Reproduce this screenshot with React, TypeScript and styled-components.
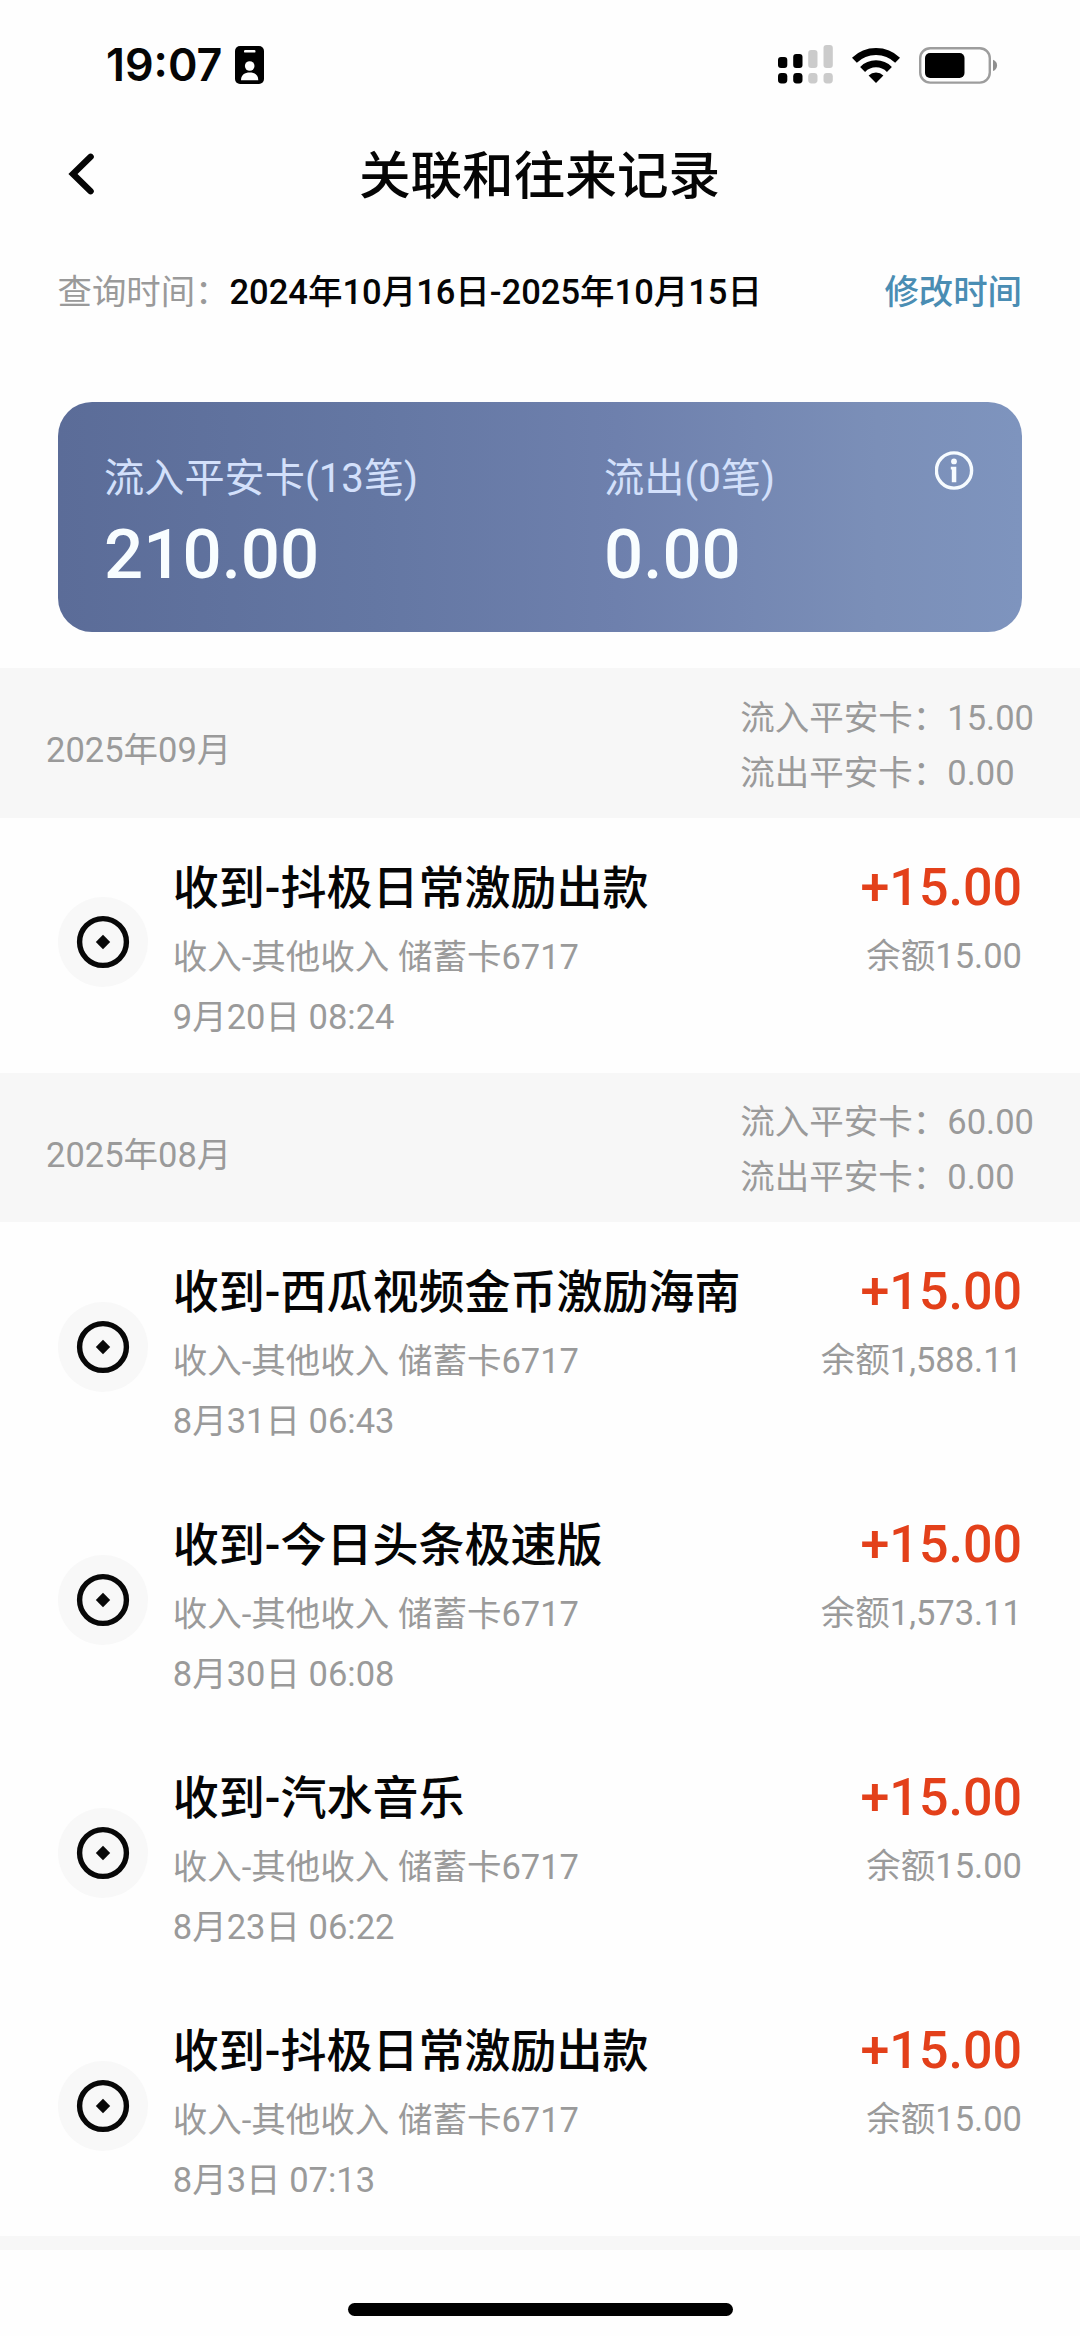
import React from "react";
import styled, { createGlobalStyle } from "styled-components";

const GlobalStyle = createGlobalStyle`
  *, *::before, *::after { box-sizing: border-box; }
  body {
    margin: 0;
    background: #fefefe;
    font-family: Roboto, "Noto Sans CJK SC", sans-serif;
    color: #050505;
  }
`;

const Screen = styled.div`
  width: 1080px;
  height: 2336px;
  display: flex;
  flex-direction: column;
  background: #fefefe;
  overflow: hidden;
`;

const StatusBar = styled.header`
  height: 128px;
  padding: 2px 82px 0 106px;
  display: flex;
  align-items: center;
  justify-content: space-between;
`;

const StatusSide = styled.div`
  display: flex;
  align-items: center;
`;

const Clock = styled.span`
  width: 129px;
  font-family: Inter, sans-serif;
  font-size: 44.8px;
  line-height: 60px;
  font-weight: 600;
  white-space: nowrap;
`;

const StatusIcon = styled.svg<{ $gap?: number }>`
  display: block;
  flex: none;
  margin-left: ${(p) => p.$gap ?? 0}px;
`;

const NavBar = styled.nav`
  height: 92px;
  padding: 0 60px 0 59px;
  display: grid;
  grid-template-columns: 60px 1fr 60px;
  align-items: center;
`;

const BackButton = styled.button`
  width: 44px;
  height: 60px;
  padding: 0 0 4px;
  border: 0;
  background: none;
  display: flex;
  align-items: center;
  justify-content: center;
`;

const Title = styled.h1`
  margin: 0;
  padding-top: 3px;
  text-align: center;
  font-size: 51.6px;
  line-height: 92px;
  font-weight: 500;
`;

const QueryRow = styled.div`
  height: 182px;
  padding: 47px 58px 0 57.5px;
  display: flex;
  align-items: flex-start;
  font-size: 34.4px;
  line-height: 50px;
  white-space: nowrap;
`;

const QueryLabel = styled.span`
  width: 172px;
  color: #9a9a9a;
`;

const QueryRange = styled.span`
  flex: 1;
  font-size: 34.5px;
  font-weight: 500;
`;

const EditLink = styled.a`
  color: #4a8db3;
  font-weight: 500;
`;

const SummaryCard = styled.section`
  height: 230px;
  margin: 0 58px 36px 57.5px;
  padding: 48px 47px 0 46.5px;
  display: grid;
  grid-template-columns: 500px 1fr 40px;
  align-items: start;
  border-radius: 34px;
  background: linear-gradient(90deg, #5b6c98 0%, #6477a3 33%, #6e80ad 58%, #7b8fb8 85%, #7e94be 100%);
`;

const SummaryLabel = styled.div`
  font-size: 40.2px;
  line-height: 58px;
  color: #d3e0fb;
  white-space: nowrap;
`;

const SummaryValue = styled.div`
  margin-top: 2px;
  font-size: 69px;
  line-height: 90px;
  font-weight: 500;
  color: #f8fdff;
`;

const InfoIcon = styled.svg`
  display: block;
`;

const MonthBar = styled.div`
  height: 149.5px;
  padding: 0 46px;
  display: flex;
  align-items: center;
  justify-content: space-between;
  background: #f7f7f7;
  color: #9a9a9a;
  font-size: 34.5px;
  white-space: nowrap;
`;

const MonthName = styled.div`
  padding-top: 15px;
  line-height: 50px;
`;

const MonthTotals = styled.div`
  line-height: 55px;
  padding-top: 6px;
`;

const MonthSection = styled.section`
  padding-bottom: 2px;
`;

const Entry = styled.article`
  height: 253px;
  padding: 40px 58px 0 58px;
  display: grid;
  grid-template-columns: 114.8px 1fr auto;
`;

const EntryBadge = styled.div`
  width: 90px;
  height: 90px;
  margin-top: 39.5px;
  border-radius: 50%;
  background: #f8f8f8;
  display: flex;
  align-items: center;
  justify-content: center;
`;

const EntryText = styled.div`
  color: #9a9a9a;
  font-size: 34.5px;
  white-space: nowrap;
`;

const EntryTitle = styled.div`
  color: #050505;
  font-size: 46px;
  line-height: 60px;
  font-weight: 500;
`;

const EntryLine = styled.div<{ $top: number }>`
  margin-top: ${(p) => p.$top}px;
  line-height: 50px;
`;

const EntryMoney = styled(EntryText)`
  text-align: right;
`;

const Amount = styled.div`
  color: #e3401a;
  font-size: 52px;
  line-height: 60px;
  font-weight: 500;
`;

const Divider = styled.div`
  height: 14px;
  background: #f7f7f7;
`;

const HomeArea = styled.footer`
  flex: 1;
  padding-top: 53px;
  display: flex;
  justify-content: center;
`;

const HomeBar = styled.div`
  width: 385px;
  height: 13px;
  border-radius: 7px;
  background: #000;
`;

type Item = { title: string; time: string; balance: string };
type Month = { name: string; income: string; outcome: string; items: Item[] };

const months: Month[] = [
  {
    name: "2025年09月",
    income: "15.00",
    outcome: "0.00",
    items: [{ title: "收到-抖极日常激励出款", time: "9月20日 08:24", balance: "15.00" }],
  },
  {
    name: "2025年08月",
    income: "60.00",
    outcome: "0.00",
    items: [
      { title: "收到-西瓜视频金币激励海南", time: "8月31日 06:43", balance: "1,588.11" },
      { title: "收到-今日头条极速版", time: "8月30日 06:08", balance: "1,573.11" },
      { title: "收到-汽水音乐", time: "8月23日 06:22", balance: "15.00" },
      { title: "收到-抖极日常激励出款", time: "8月3日 07:13", balance: "15.00" },
    ],
  },
];

const signalBars = [
  { x: 0, top: 12, on: true },
  { x: 15.2, top: 9, on: true },
  { x: 30.2, top: 5, on: false },
  { x: 45.5, top: 0, on: false },
];

function IdBadge() {
  return (
    <StatusIcon width="29" height="38" viewBox="0 0 29 38">
      <rect width="29" height="38" rx="5" fill="#000" />
      <rect x="9" y="4" width="11.5" height="2.6" rx="1.2" fill="#fff" />
      <circle cx="14.7" cy="20" r="4.8" fill="#fff" />
      <path d="M6 34.2C6 29 9.8 26.6 14.7 26.6S23.3 29 23.3 34.2Z" fill="#fff" />
    </StatusIcon>
  );
}

function Signal() {
  return (
    <StatusIcon width="55" height="40" viewBox="0 0 55 40">
      {signalBars.map((b) => (
        <g key={b.x} fill={b.on ? "#000" : "#cbcbcb"}>
          <rect x={b.x} y={b.top} width="9.3" height={23 - b.top} rx="3" />
          <rect x={b.x} y="28" width="9.3" height="10.5" rx="3.4" />
        </g>
      ))}
    </StatusIcon>
  );
}

function Wifi() {
  return (
    <StatusIcon $gap={19} width="48" height="36" viewBox="0 0 48 36">
      <g fill="none" stroke="#000" strokeWidth="7">
        <path d="M2.4 13.2A31 31 0 0 1 45.6 13.2" />
        <path d="M10.6 22.4A19 19 0 0 1 37.4 22.4" />
      </g>
      <path d="M16.6 28.4A10.6 10.6 0 0 1 31.4 28.4L24 36Z" fill="#000" />
    </StatusIcon>
  );
}

function Battery() {
  return (
    <StatusIcon $gap={19} width="79" height="37" viewBox="0 0 79 37">
      <rect x="1.2" y="1.2" width="69.6" height="34.4" rx="10" fill="none" stroke="#9d9d9d" strokeWidth="2.4" />
      <rect x="6" y="6" width="39.5" height="25" rx="5" fill="#000" />
      <path d="M74 12.8C79.4 14.5 79.4 22.3 74 24Z" fill="#8f8f8f" />
    </StatusIcon>
  );
}

export default function App() {
  return (
    <>
      <GlobalStyle />
      <Screen>
        <StatusBar>
          <StatusSide>
            <Clock>19:07</Clock>
            <IdBadge />
          </StatusSide>
          <StatusSide>
            <Signal />
            <Wifi />
            <Battery />
          </StatusSide>
        </StatusBar>

        <NavBar>
          <BackButton aria-label="返回">
            <svg width="26" height="42" viewBox="0 0 26 42">
              <path d="M22.6 3.8L5 21L22.6 38.2" fill="none" stroke="#050505" strokeWidth="6.4" strokeLinecap="round" strokeLinejoin="miter" />
            </svg>
          </BackButton>
          <Title>关联和往来记录</Title>
        </NavBar>

        <QueryRow>
          <QueryLabel>查询时间：</QueryLabel>
          <QueryRange>2024年10月16日-2025年10月15日</QueryRange>
          <EditLink>修改时间</EditLink>
        </QueryRow>

        <SummaryCard>
          <div>
            <SummaryLabel>流入平安卡(13笔)</SummaryLabel>
            <SummaryValue>210.00</SummaryValue>
          </div>
          <div>
            <SummaryLabel>流出(0笔)</SummaryLabel>
            <SummaryValue>0.00</SummaryValue>
          </div>
          <InfoIcon width="40" height="40" viewBox="0 0 40 40">
            <circle cx="19" cy="20.5" r="17.6" fill="none" stroke="#f6fbff" strokeWidth="3.4" />
            <circle cx="19" cy="11.4" r="2.9" fill="#f6fbff" />
            <path d="M15.8 16.8H21.3V32.2H16.8V19.4H15.8Z" fill="#f6fbff" />
          </InfoIcon>
        </SummaryCard>

        {months.map((m) => (
          <MonthSection key={m.name}>
            <MonthBar>
              <MonthName>{m.name}</MonthName>
              <MonthTotals>
                <div>流入平安卡：{m.income}</div>
                <div>流出平安卡：{m.outcome}</div>
              </MonthTotals>
            </MonthBar>
            {m.items.map((it) => (
              <Entry key={it.time}>
                <EntryBadge>
                  <svg width="54" height="54" viewBox="0 0 54 54">
                    <circle cx="27" cy="27" r="23.4" fill="none" stroke="#080808" strokeWidth="5.4" />
                    <path d="M27 19.8L34.2 27L27 34.2L19.8 27Z" fill="#080808" />
                  </svg>
                </EntryBadge>
                <EntryText>
                  <EntryTitle>{it.title}</EntryTitle>
                  <EntryLine $top={14}>收入-其他收入 储蓄卡6717</EntryLine>
                  <EntryLine $top={10}>{it.time}</EntryLine>
                </EntryText>
                <EntryMoney>
                  <Amount>+15.00</Amount>
                  <EntryLine $top={13}>余额{it.balance}</EntryLine>
                </EntryMoney>
              </Entry>
            ))}
          </MonthSection>
        ))}
        <Divider />
        <HomeArea>
          <HomeBar />
        </HomeArea>
      </Screen>
    </>
  );
}
